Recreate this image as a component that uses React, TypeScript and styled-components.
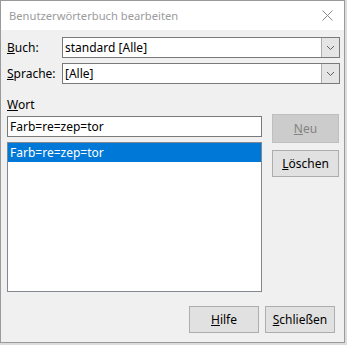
import React from "react";
import styled, { createGlobalStyle } from "styled-components";

const GlobalStyle = createGlobalStyle`
  html, body {
    margin: 0;
    padding: 0;
    background: #dcdcdc;
  }
  body {
    font-family: "Noto Sans", "Liberation Sans", sans-serif;
    font-size: 12px;
    color: #000;
  }
`;

const Window = styled.div`
  width: 345px;
  height: 343px;
  box-sizing: border-box;
  border: 1px solid #9a9a9a;
  background: #f0f0f0;
  display: flex;
  flex-direction: column;
`;

const TitleBar = styled.div`
  height: 29px;
  background: #fff;
  display: flex;
  align-items: center;
  justify-content: space-between;
  padding: 0 8px 0 8px;
  color: #9b9b9b;
  font-size: 11.2px;
`;

const CloseIcon = styled.svg`
  width: 11px;
  height: 11px;
  margin-right: 3px;
`;

const Body = styled.div`
  flex: 1;
  display: flex;
  flex-direction: column;
  padding: 7px 4px 9px 6px;
`;

const FieldRow = styled.div`
  display: grid;
  grid-template-columns: 55px 1fr;
  align-items: center;
  margin-bottom: 5px;
`;

const Label = styled.span`
  padding-left: 0;
`;

const Combo = styled.div`
  height: 21px;
  box-sizing: border-box;
  border: 1px solid #7a7a7a;
  background: #fff;
  display: flex;
  align-items: stretch;
`;

const ComboText = styled.div`
  flex: 1;
  display: flex;
  align-items: center;
  padding-left: 2px;
`;

const ComboArrow = styled.div`
  width: 17px;
  background: #e5e5e5;
  border-left: 1px solid #adadad;
  display: flex;
  align-items: center;
  justify-content: center;
`;

const SectionLabel = styled.div`
  margin-top: 7px;
  height: 18px;
  line-height: 18px;
`;

const WordArea = styled.div`
  display: grid;
  grid-template-columns: 255px 1fr;
  column-gap: 10px;
  flex: 1;
`;

const WordColumn = styled.div`
  display: flex;
  flex-direction: column;
  gap: 5px;
  padding-top: 2px;
`;

const TextInput = styled.div`
  height: 21px;
  box-sizing: border-box;
  border: 1px solid #7a7a7a;
  background: #fff;
  display: flex;
  align-items: center;
  padding-left: 2px;
`;

const ListBox = styled.div`
  height: 150px;
  box-sizing: border-box;
  border: 1px solid #828790;
  background: #fff;
`;

const ListItem = styled.div<{ $selected?: boolean }>`
  height: 19px;
  line-height: 19px;
  padding-left: 2px;
  background: ${(p) => (p.$selected ? "#0078d7" : "transparent")};
  color: ${(p) => (p.$selected ? "#fff" : "#000")};
`;

const ButtonColumn = styled.div`
  display: flex;
  flex-direction: column;
  gap: 7px;
`;

const Button = styled.div<{ $disabled?: boolean; $width?: number; $height?: number }>`
  width: ${(p) => p.$width ?? 67}px;
  height: ${(p) => p.$height ?? 27}px;
  box-sizing: border-box;
  border: 1px solid ${(p) => (p.$disabled ? "#bfbfbf" : "#adadad")};
  background: ${(p) => (p.$disabled ? "#cccccc" : "#e1e1e1")};
  color: ${(p) => (p.$disabled ? "#838383" : "#000")};
  display: flex;
  align-items: center;
  justify-content: center;
`;

const Footer = styled.div`
  display: flex;
  justify-content: flex-end;
  gap: 6px;
  padding-right: 5px;
`;

const Chevron = () => (
  <svg width="9" height="6" viewBox="0 0 9 6">
    <path d="M1 1 L4.5 4.5 L8 1" fill="none" stroke="#606060" strokeWidth="1" />
  </svg>
);

export default function App() {
  return (
    <>
      <GlobalStyle />
      <Window>
        <TitleBar>
          <span>Benutzerwörterbuch bearbeiten</span>
          <CloseIcon viewBox="0 0 11 11">
            <path d="M0.5 0.5 L10.5 10.5 M10.5 0.5 L0.5 10.5" stroke="#8a8a8a" strokeWidth="1" />
          </CloseIcon>
        </TitleBar>
        <Body>
          <FieldRow>
            <Label><u>B</u>uch:</Label>
            <Combo>
              <ComboText>standard [Alle]</ComboText>
              <ComboArrow><Chevron /></ComboArrow>
            </Combo>
          </FieldRow>
          <FieldRow>
            <Label><u>S</u>prache:</Label>
            <Combo>
              <ComboText>[Alle]</ComboText>
              <ComboArrow><Chevron /></ComboArrow>
            </Combo>
          </FieldRow>
          <SectionLabel><u>W</u>ort</SectionLabel>
          <WordArea>
            <WordColumn>
              <TextInput>Farb=re=zep=tor</TextInput>
              <ListBox>
                <ListItem $selected>Farb=re=zep=tor</ListItem>
              </ListBox>
            </WordColumn>
            <ButtonColumn>
              <Button $disabled $height={29}><span><u>N</u>eu</span></Button>
              <Button><span><u>L</u>öschen</span></Button>
            </ButtonColumn>
          </WordArea>
          <Footer>
            <Button $width={70}><span><u>H</u>ilfe</span></Button>
            <Button $width={70}><span><u>S</u>chließen</span></Button>
          </Footer>
        </Body>
      </Window>
    </>
  );
}
